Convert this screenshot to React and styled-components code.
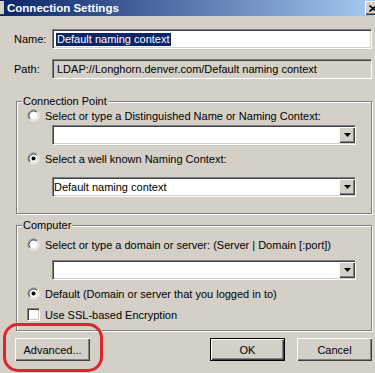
import React from "react";
import styled, { createGlobalStyle } from "styled-components";

const GlobalStyle = createGlobalStyle`
  html, body {
    margin: 0;
    padding: 0;
    background: #d4d0c8;
  }
  body {
    font-family: "Liberation Sans", Arial, sans-serif;
    font-size: 11px;
    color: #000;
  }
`;

const Window = styled.div`
  width: 375px;
  height: 373px;
  overflow: hidden;
  background: #d4d0c8;
`;

const TitleBar = styled.div`
  height: 16px;
  display: flex;
  align-items: center;
  background: linear-gradient(to right, #0a246a, #a6caf0);
`;

const FrameStub = styled.div`
  width: 4px;
  height: 14px;
  background: #d4d0c8;
  border-bottom: 1px solid #404040;
  box-sizing: border-box;
`;

const Title = styled.span`
  color: #fff;
  font-weight: bold;
  font-size: 11.5px;
  padding-left: 3px;
`;

const CloseButton = styled.div`
  margin-left: auto;
  margin-right: -6px;
  width: 16px;
  height: 14px;
  background: #d4d0c8;
  box-sizing: border-box;
  box-shadow: inset 1px 1px 0 #fff, inset -1px -1px 0 #404040,
    inset -2px -2px 0 #808080;
  display: flex;
  align-items: center;
  justify-content: center;
`;

const Body = styled.div`
  padding: 13px 3px 0 14px;
`;

const FieldRow = styled.div`
  display: flex;
  align-items: center;
  margin-top: ${(p) => p.$gap || 0}px;
`;

const Label = styled.span`
  width: 38px;
`;

const Field = styled.div`
  flex: 1;
  height: 20px;
  box-sizing: border-box;
  border-top: 1px solid #808080;
  border-left: 1px solid #808080;
  border-bottom: 1px solid #fff;
  border-right: 1px solid #fff;
  box-shadow: inset 1px 1px 0 #404040, inset -1px -1px 0 #d4d0c8;
  background: ${(p) => (p.$readOnly ? "#d4d0c8" : "#fff")};
  display: flex;
  align-items: center;
  padding-left: ${(p) => p.$pad ?? 3}px;
  white-space: nowrap;
`;

const Selected = styled.span`
  background: #0a246a;
  color: #fff;
  padding: 0 1px;
  line-height: 13px;
`;

const Group = styled.fieldset`
  margin: ${(p) => p.$top}px 0 0 2px;
  padding: ${(p) => p.$padTop}px 0 ${(p) => p.$padBottom}px 0;
  border: 1px solid #808080;
  box-shadow: inset 1px 1px 0 #fff, 1px 1px 0 #fff;
  min-width: 0;
  display: flex;
  flex-direction: column;
`;

const Legend = styled.legend`
  margin-left: 5px;
  padding: 0 1px;
  line-height: 13px;
  background: #d4d0c8;
`;

const Option = styled.div`
  display: flex;
  align-items: center;
  gap: 5px;
  height: 13px;
  padding-left: 10px;
  margin-top: ${(p) => p.$gap || 0}px;
`;

const Combo = styled(Field)`
  flex: none;
  margin: ${(p) => p.$gap || 0}px 15px 0 35px;
  padding-right: 0;
`;

const DropButton = styled.div`
  margin-left: auto;
  width: 16px;
  height: 16px;
  box-sizing: border-box;
  background: #d4d0c8;
  box-shadow: inset 1px 1px 0 #fff, inset -1px -1px 0 #404040,
    inset -2px -2px 0 #808080;
  display: flex;
  align-items: center;
  justify-content: center;
`;

const CheckBox = styled.div`
  width: 13px;
  height: 13px;
  box-sizing: border-box;
  background: #fff;
  border-top: 1px solid #808080;
  border-left: 1px solid #808080;
  border-bottom: 1px solid #fff;
  border-right: 1px solid #fff;
  box-shadow: inset 1px 1px 0 #404040, inset -1px -1px 0 #d4d0c8;
`;

const ButtonRow = styled.div`
  display: flex;
  margin: 7px 0 0 1px;
`;

const Anchor = styled.div`
  position: relative;
`;

const Button = styled.div`
  width: 75px;
  height: 23px;
  box-sizing: border-box;
  display: flex;
  align-items: center;
  justify-content: center;
  background: #d4d0c8;
  border: ${(p) => (p.$default ? "1px solid #000" : "none")};
  box-shadow: inset 1px 1px 0 #fff, inset -1px -1px 0 #404040,
    inset -2px -2px 0 #808080;
  margin-left: ${(p) => p.$gap || 0}px;
  ${(p) => (p.$push ? "margin-left: auto;" : "")}
`;

const Highlight = styled.div`
  position: absolute;
  left: -12px;
  top: -15px;
  width: 100px;
  height: 49px;
  box-sizing: border-box;
  border: 3px solid #e4212e;
  border-radius: 15px;
  pointer-events: none;
`;

const Radio = ({ checked }) => (
  <svg width="13" height="13" viewBox="0 0 13 13">
    <circle cx="6.5" cy="6.5" r="5" fill="#fff" />
    <path d="M2.61 10.39 A5.5 5.5 0 0 1 10.39 2.61" stroke="#808080" fill="none" />
    <path d="M10.39 2.61 A5.5 5.5 0 0 1 2.61 10.39" stroke="#fff" fill="none" />
    <path d="M3.32 9.68 A4.5 4.5 0 0 1 9.68 3.32" stroke="#404040" fill="none" />
    <path d="M9.68 3.32 A4.5 4.5 0 0 1 3.32 9.68" stroke="#d4d0c8" fill="none" />
    {checked && <circle cx="6.5" cy="6.5" r="2" fill="#000" />}
  </svg>
);

const Arrow = () => (
  <svg width="7" height="4" viewBox="0 0 7 4">
    <path d="M0 0 H7 L3.5 4 Z" fill="#000" />
  </svg>
);

const CloseGlyph = () => (
  <svg width="8" height="7" viewBox="0 0 8 7">
    <path d="M0.5 0.5 L7.5 6.5 M7.5 0.5 L0.5 6.5" stroke="#000" strokeWidth="1.6" />
  </svg>
);

const App = () => (
  <Window>
    <GlobalStyle />
    <TitleBar>
      <FrameStub />
      <Title>Connection Settings</Title>
      <CloseButton>
        <CloseGlyph />
      </CloseButton>
    </TitleBar>
    <Body>
      <FieldRow>
        <Label>Name:</Label>
        <Field $pad={3}>
          <Selected>Default naming context</Selected>
        </Field>
      </FieldRow>
      <FieldRow $gap={10}>
        <Label>Path:</Label>
        <Field $readOnly $pad={4}>
          LDAP://Longhorn.denver.com/Default naming context
        </Field>
      </FieldRow>

      <Group $top={16} $padTop={1} $padBottom={16}>
        <Legend>Connection Point</Legend>
        <Option>
          <Radio />
          Select or type a Distinguished Name or Naming Context:
        </Option>
        <Combo $gap={3}>
          <DropButton>
            <Arrow />
          </DropButton>
        </Combo>
        <Option $gap={7}>
          <Radio checked />
          Select a well known Naming Context:
        </Option>
        <Combo $gap={12} $pad={1}>
          Default naming context
          <DropButton>
            <Arrow />
          </DropButton>
        </Combo>
      </Group>

      <Group $top={5} $padTop={6} $padBottom={9}>
        <Legend>Computer</Legend>
        <Option>
          <Radio />
          Select or type a domain or server: (Server | Domain [:port])
        </Option>
        <Combo $gap={9}>
          <DropButton>
            <Arrow />
          </DropButton>
        </Combo>
        <Option $gap={7}>
          <Radio checked />
          Default (Domain or server that you logged in to)
        </Option>
        <Option $gap={8}>
          <CheckBox />
          Use SSL-based Encryption
        </Option>
      </Group>

      <ButtonRow>
        <Anchor>
          <Button>Advanced...</Button>
          <Highlight />
        </Anchor>
        <Button $push $default>
          OK
        </Button>
        <Button $gap={12}>Cancel</Button>
      </ButtonRow>
    </Body>
  </Window>
);

export default App;
